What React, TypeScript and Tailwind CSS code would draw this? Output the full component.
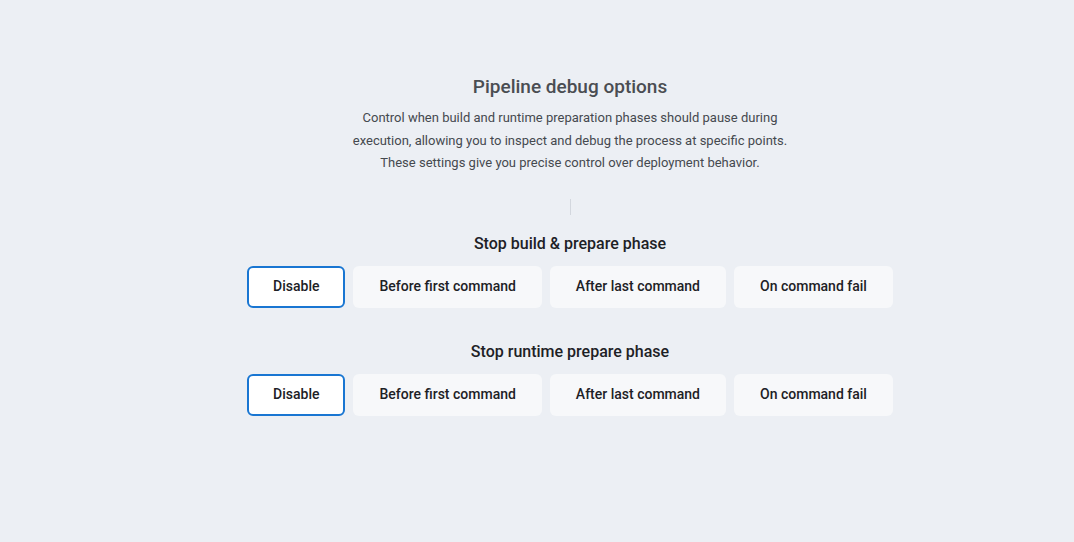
import React, { useState } from 'react';

const options = ['Disable', 'Before first command', 'After last command', 'On command fail'];

const Section: React.FC<{ title: string; className?: string }> = ({ title, className }) => {
  const [selected, setSelected] = useState('Disable');
  return (
    <div className={`flex flex-col items-center ${className ?? ''}`}>
      <h2 className="text-[16px] leading-6 font-medium text-[#1d2126]">{title}</h2>
      <div className="flex gap-2 mt-[10px]">
        {options.map((o) => (
          <button
            key={o}
            onClick={() => setSelected(o)}
            className={`h-[42px] px-6 rounded-md border-2 text-[14px] font-medium text-[#1d2126] ${
              selected === o ? 'bg-white border-[#1976d2]' : 'bg-[#f7f8fa] border-transparent'
            }`}
          >
            {o}
          </button>
        ))}
      </div>
    </div>
  );
};

const App: React.FC = () => {
  return (
    <div className="min-h-screen bg-[#eceff4] pl-[66px] pt-[75px]" style={{ fontFamily: 'Roboto, sans-serif' }}>
      <div className="flex flex-col items-center">
        <h1 className="text-[19px] leading-6 font-medium text-[#4a4d52]">Pipeline debug options</h1>
        <p className="mt-[8px] text-[13px] leading-[22.5px] text-[#45494f] text-center">
          Control when build and runtime preparation phases should pause during
          <br />
          execution, allowing you to inspect and debug the process at specific points.
          <br />
          These settings give you precise control over deployment behavior.
        </p>
        <div className="mt-[24px] w-px h-4 bg-[#d3d7de]" />
        <Section title="Stop build & prepare phase" className="mt-[17px]" />
        <Section title="Stop runtime prepare phase" className="mt-[32px]" />
      </div>
    </div>
  );
};

export default App;
